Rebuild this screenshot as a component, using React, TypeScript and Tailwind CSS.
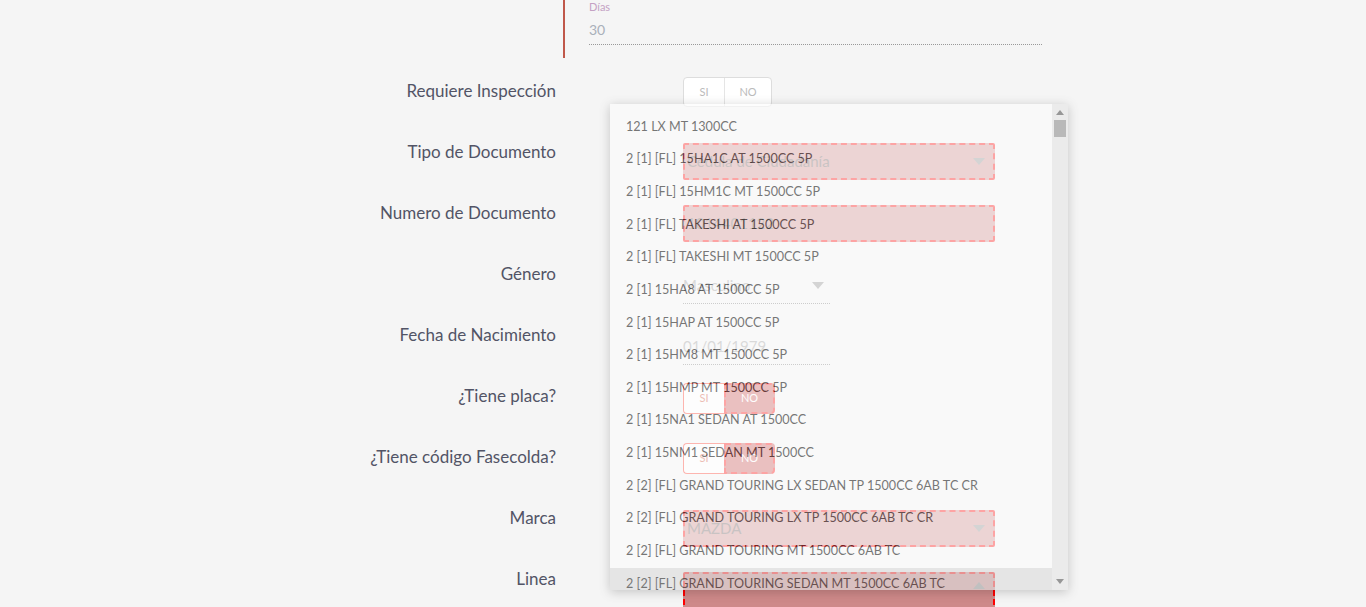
import React from 'react'

const FONT = { fontFamily: 'Lato, "Open Sans", sans-serif' }

const options = [
  '121 LX MT 1300CC',
  '2 [1] [FL] 15HA1C AT 1500CC 5P',
  '2 [1] [FL] 15HM1C MT 1500CC 5P',
  '2 [1] [FL] TAKESHI AT 1500CC 5P',
  '2 [1] [FL] TAKESHI MT 1500CC 5P',
  '2 [1] 15HA8 AT 1500CC 5P',
  '2 [1] 15HAP AT 1500CC 5P',
  '2 [1] 15HM8 MT 1500CC 5P',
  '2 [1] 15HMP MT 1500CC 5P',
  '2 [1] 15NA1 SEDAN AT 1500CC',
  '2 [1] 15NM1 SEDAN MT 1500CC',
  '2 [2] [FL] GRAND TOURING LX SEDAN TP 1500CC 6AB TC CR',
  '2 [2] [FL] GRAND TOURING LX TP 1500CC 6AB TC CR',
  '2 [2] [FL] GRAND TOURING MT 1500CC 6AB TC',
  '2 [2] [FL] GRAND TOURING SEDAN MT 1500CC 6AB TC',
]

function Caret({ up = false }: { up?: boolean }) {
  return (
    <svg width="12" height="7" viewBox="0 0 12 7" className="block shrink-0">
      <path d={up ? 'M0 7 L6 0 L12 7 Z' : 'M0 0 L12 0 L6 7 Z'} fill="#8a8a8a" />
    </svg>
  )
}

function ErrorSelect({
  value,
  caret = true,
  up = false,
  className = '',
}: {
  value: string
  caret?: boolean
  up?: boolean
  className?: string
}) {
  return (
    <div
      className={`flex items-start justify-between w-[312px] h-[37px] pl-[2px] pr-[8px] pt-[6px] border-2 border-dashed border-[#ff0000] bg-[#ce8989] rounded-[2px] text-[15px] leading-[20px] text-[#6a5a5a] ${className}`}
    >
      <span>{value}</span>
      {caret && (
        <span className={`flex ${up ? 'mt-[2px]' : 'mt-[7px]'}`}>
          <Caret up={up} />
        </span>
      )}
    </div>
  )
}

function Toggle({ error = false }: { error?: boolean }) {
  if (!error) {
    return (
      <div className="flex h-[30px] w-[89px] rounded-[4px] border border-[#dddddd] bg-white text-[11px] text-[#bbbbbb]">
        <div className="flex w-[41px] items-center justify-center border-r border-[#e5e5e5]">SI</div>
        <div className="flex flex-1 items-center justify-center">NO</div>
      </div>
    )
  }
  return (
    <div className="flex h-[31px] text-[11px]">
      <div className="flex w-[41px] items-center justify-center rounded-l-[4px] border border-r-0 border-[#ff3020] bg-white text-[#d04a30]">
        SI
      </div>
      <div className="flex w-[51px] items-center justify-center rounded-r-[4px] border-2 border-dashed border-[#ff0000] bg-[#cb5050] text-white">
        NO
      </div>
    </div>
  )
}

function UnderlineSelect({ value, caret = false }: { value: string; caret?: boolean }) {
  return (
    <div className="mt-[16px] flex w-[147px] items-center justify-between border-b border-dotted border-[#777777] pb-[6px] text-[15px] text-[#9a9a9a]">
      <span>{value}</span>
      {caret && (
        <span className="mr-[6px] flex">
          <Caret />
        </span>
      )}
    </div>
  )
}

function Row({ label, children, offset }: { label: string; children: React.ReactNode; offset: string }) {
  return (
    <div className="flex h-[61px] items-start">
      <div className="w-[556px] shrink-0 text-right text-[17px] leading-[32px] text-[#525466]">{label}</div>
      <div className={`ml-[127px] ${offset}`}>{children}</div>
    </div>
  )
}

export default function App() {
  return (
    <div className="relative h-[607px] w-[1366px] overflow-hidden bg-[#f5f5f5]" style={FONT}>
      {/* Dias block */}
      <div className="flex h-[75px]">
        <div className="w-[563px] shrink-0" />
        <div className="h-[58px] border-l-2 border-[#c0584a] pl-[24px]">
          <div className="text-[11px] leading-[13px] text-[#c4a2c4]">Días</div>
          <div className="mt-[8px] w-[453px] border-b border-dotted border-[#999999] pb-[5px] text-[14px] leading-[18px] text-[#a9b0ba]">
            30
          </div>
        </div>
      </div>

      <Row label="Requiere Inspección" offset="mt-[2px]">
        <Toggle />
      </Row>
      <Row label="Tipo de Documento" offset="mt-[7px]">
        <ErrorSelect value="Cédula de Ciudadanía" />
      </Row>
      <Row label="Numero de Documento" offset="mt-[8px]">
        <ErrorSelect value="1014401122" caret={false} />
      </Row>
      <Row label="Género" offset="">
        <UnderlineSelect value="Masculino" caret />
      </Row>
      <Row label="Fecha de Nacimiento" offset="">
        <UnderlineSelect value="01/01/1979" />
      </Row>
      <Row label="¿Tiene placa?" offset="mt-[3px]">
        <Toggle error />
      </Row>
      <Row label="¿Tiene código Fasecolda?" offset="mt-[2px]">
        <Toggle error />
      </Row>
      <Row label="Marca" offset="mt-[8px]">
        <ErrorSelect value="MAZDA" />
      </Row>
      <Row label="Linea" offset="mt-[9px]">
        <ErrorSelect value="" up className="h-[42px] border-b-[3px] border-b-solid" />
      </Row>

      {/* open listbox, caught mid fade-in */}
      <div className="absolute left-[610px] top-[104px] flex h-[486px] w-[458px] bg-[#fcfcfc] opacity-[0.65] shadow-[0_2px_10px_rgba(0,0,0,0.3)]">
        <div className="flex-1 overflow-hidden pt-[7px]">
          {options.map((o, i) => (
            <div
              key={o}
              className={`flex h-[32.64px] items-center whitespace-nowrap pl-[16px] text-[12.6px] text-[#333333] ${
                i === options.length - 1 ? 'bg-[#dedede]' : ''
              }`}
            >
              {o}
            </div>
          ))}
        </div>
        <div className="flex w-[16px] flex-col items-center bg-[#e6e6e6]">
          <svg width="8" height="5" viewBox="0 0 8 5" className="mt-[6px]">
            <path d="M0 5 L4 0 L8 5 Z" fill="#666666" />
          </svg>
          <div className="mt-[5px] h-[17px] w-[12px] bg-[#9a9a9a]" />
          <div className="flex-1" />
          <svg width="8" height="5" viewBox="0 0 8 5" className="mb-[6px]">
            <path d="M0 0 L8 0 L4 5 Z" fill="#666666" />
          </svg>
        </div>
      </div>
    </div>
  )
}
